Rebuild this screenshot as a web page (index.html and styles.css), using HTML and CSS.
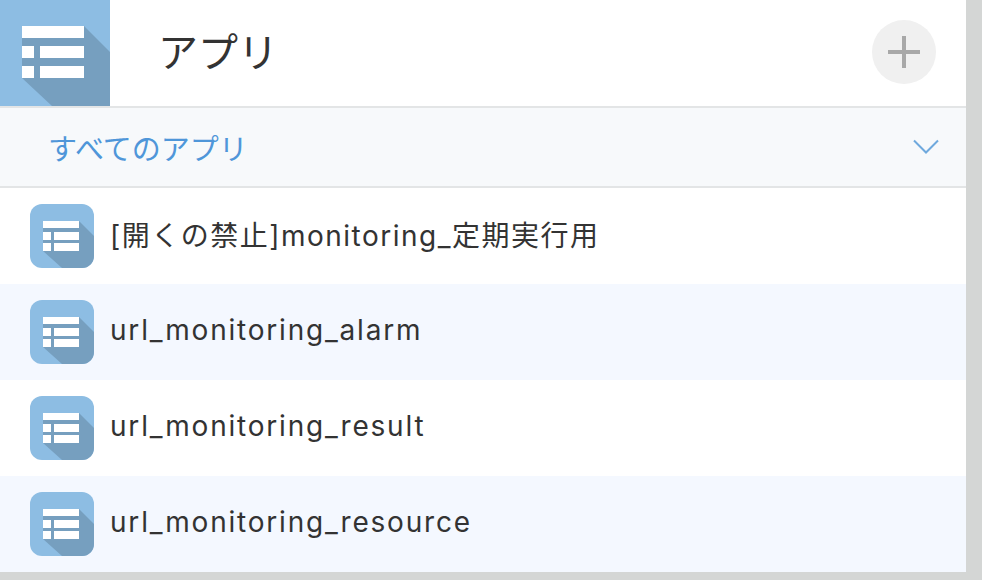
FILE: index.html
```html
<!DOCTYPE html>
<html lang="ja">
<head>
    <meta charset="UTF-8">
    <meta name="viewport" content="width=device-width, initial-scale=1.0">
    <title>アプリ</title>
    <link rel="stylesheet" href="styles.css">
</head>
<body>
    <div class="panel">
        <div class="header">
            <svg class="header-icon" viewBox="0 0 110 106">
                <rect width="110" height="106" fill="#8dbde3"/>
                <polygon points="84,26 110,52 110,106 52,106 22,78 22,38" fill="#769fbf"/>
                <path d="M22 26h62v12H22zM22 46h12v12H22zM40 46h44v12H40zM22 66h12v12H22zM40 66h44v12H40z" fill="#fff"/>
            </svg>
            <h1>アプリ</h1>
            <button class="add-button">
                <svg viewBox="0 0 32 32" width="32" height="32">
                    <path d="M16 0v32M0 16h32" stroke="#a8a8a8" stroke-width="4" fill="none"/>
                </svg>
            </button>
        </div>
        <div class="filter">
            <span>すべてのアプリ</span>
            <svg viewBox="0 0 26 16" width="26" height="16">
                <path d="M1 1.5l12 12 12-12" stroke="#6fa9dd" stroke-width="2" fill="none"/>
            </svg>
        </div>
        <ul class="app-list">
            <li class="app-row">
                <svg class="app-icon" viewBox="0 0 64 64"><use href="#app"/></svg>
                <span>[開くの禁止]monitoring_定期実行用</span>
            </li>
            <li class="app-row">
                <svg class="app-icon" viewBox="0 0 64 64"><use href="#app"/></svg>
                <span>url_monitoring_alarm</span>
            </li>
            <li class="app-row">
                <svg class="app-icon" viewBox="0 0 64 64"><use href="#app"/></svg>
                <span>url_monitoring_result</span>
            </li>
            <li class="app-row">
                <svg class="app-icon" viewBox="0 0 64 64"><use href="#app"/></svg>
                <span>url_monitoring_resource</span>
            </li>
        </ul>
    </div>
    <svg class="defs" width="0" height="0">
        <defs>
            <clipPath id="app-clip"><rect width="64" height="64" rx="12"/></clipPath>
            <g id="app" clip-path="url(#app-clip)">
                <rect width="64" height="64" fill="#8dbde3"/>
                <polygon points="49,17 64,32 64,64 32,64 13,47 13,24" fill="#769fbf"/>
                <path d="M13 17h36v7H13zM13 28h8v8h-8zM24 28h25v8H24zM13 39h8v8h-8zM24 39h25v8H24z" fill="#fff"/>
            </g>
        </defs>
    </svg>
</body>
</html>
```

FILE: styles.css
```css
body {
    margin: 0;
    height: 580px;
    overflow: hidden;
    background-color: #d4d6d5;
    font-family: Inter, "Noto Sans CJK JP", sans-serif;
    color: #333333;
}
.panel {
    width: 966px;
    background-color: white;
}
.header {
    display: flex;
    align-items: center;
    height: 106px;
    border-bottom: 2px solid #e3e5e6;
}
.header-icon {
    width: 110px;
    height: 106px;
    flex-shrink: 0;
}
h1 {
    flex: 1;
    margin: 0 0 6px 48px;
    font-size: 40px;
    font-weight: 400;
}
.add-button {
    display: flex;
    justify-content: center;
    align-items: center;
    width: 64px;
    height: 64px;
    margin: 0 30px 3px 0;
    padding: 0;
    border: none;
    border-radius: 50%;
    background-color: #f0f0f0;
}
.filter {
    display: flex;
    justify-content: space-between;
    align-items: center;
    height: 78px;
    padding: 0 27px 0 48px;
    background-color: #f7f9fb;
    border-bottom: 2px solid #e3e5e6;
    color: #4f96d9;
    font-size: 29px;
}
.app-list {
    margin: 0;
    padding: 0;
    list-style: none;
}
.app-row {
    display: flex;
    align-items: center;
    gap: 16px;
    height: 96px;
    padding-left: 30px;
    font-size: 28px;
    letter-spacing: 1.8px;
}
.app-row:first-child {
    letter-spacing: 1.5px;
}
.app-row span {
    padding-bottom: 4px;
}
.app-row:nth-child(even) {
    background-color: #f4f8ff;
}
.app-icon {
    width: 64px;
    height: 64px;
    flex-shrink: 0;
}
.defs {
    position: absolute;
}
```
